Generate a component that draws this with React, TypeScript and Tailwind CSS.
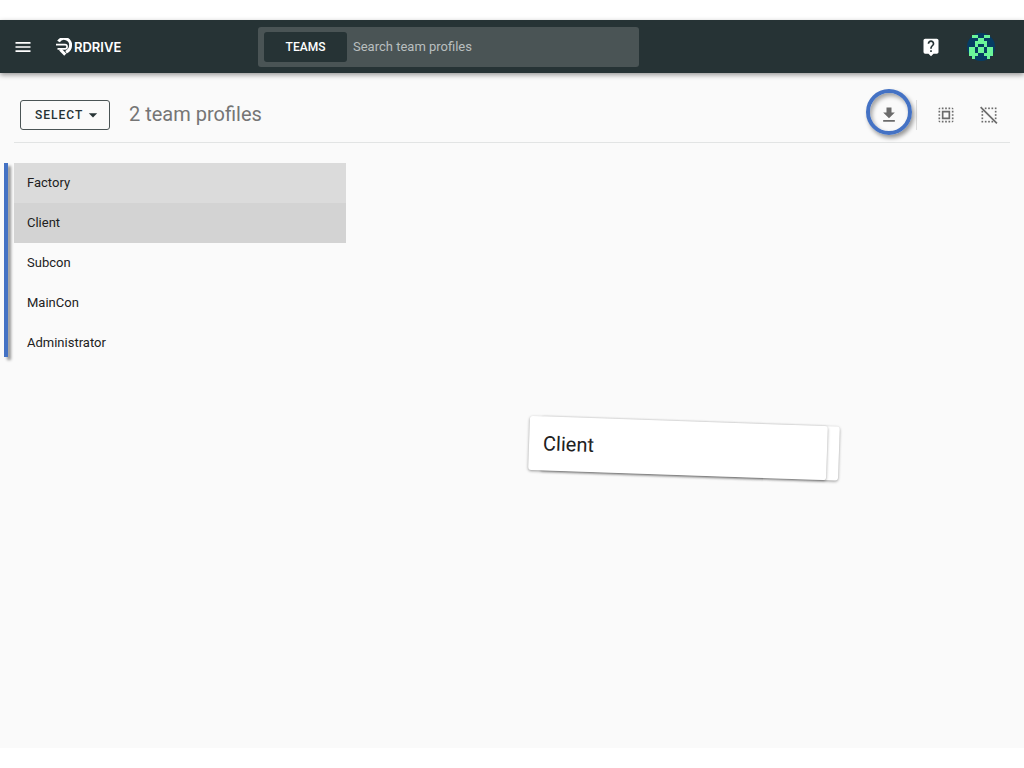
import React, { useState } from 'react';
import { MdArrowDropDown, MdDownload, MdLiveHelp, MdMenu, MdSelectAll } from 'react-icons/md';

const teams = ['Factory', 'Client', 'Subcon', 'MainCon', 'Administrator'];

// filled cells of the identicon, one string per row
const identicon = [
  '.##..##.',
  '...##...',
  '..####..',
  '..#..#..',
  '##.##.##',
  '##.##.##',
  '###..###',
  '.#....#.',
];

// top left corners of the dots in the dotted square
const dots = [
  [7, 3], [11, 3], [15, 3], [19, 3],
  [3, 7], [3, 11], [3, 15], [3, 19],
  [19, 7], [19, 11], [19, 15],
  [7, 19], [11, 19], [15, 19],
];

const Logo: React.FC = () => (
  <a href="#" className="flex items-center gap-0.5 text-white">
    <svg viewBox="0 0 16 18" className="w-4 h-[18px]" fill="none" stroke="currentColor">
      <path d="M2.500 3.600A6.500 6.500 0 0 1 14.500 8C14.500 11 12.500 12.800 10 14.200" strokeWidth="3" />
      <path d="M0 6.700H9A2.100 2.100 0 0 1 9 10.900H1.500" strokeWidth="1.700" />
      <path d="M4.200 11.500L9.300 16.600" strokeWidth="3" />
    </svg>
    <span className="font-['Inter',sans-serif] text-[13px] leading-4 font-semibold">RDRIVE</span>
  </a>
);

const Avatar: React.FC = () => (
  <svg viewBox="0 0 28 28" className="w-7 h-7" shapeRendering="crispEdges">
    <circle cx="14" cy="14" r="14" fill="#063c63" shapeRendering="auto" />
    {identicon.map((row, y) =>
      row.split('').map((cell, x) =>
        cell === '#' ? <rect key={`${x}-${y}`} x={2 + x * 3} y={2 + y * 3} width="3" height="3" fill="#6bf59a" /> : null
      )
    )}
  </svg>
);

const ClearIcon: React.FC = () => (
  <svg viewBox="0 0 24 24" className="w-5 h-5" fill="currentColor">
    {dots.map(([x, y]) => (
      <rect key={`${x}-${y}`} x={x} y={y} width="2" height="2" />
    ))}
    <path d="M2 2.500L21.500 22" stroke="currentColor" strokeWidth="2" />
  </svg>
);

const Header: React.FC = () => {
  const [query, setQuery] = useState('');

  return (
    <header className="relative flex items-center h-[53px] bg-[#263335] shadow-[0_2px_5px_rgba(0,0,0,0.4)]">
      <div className="flex items-center gap-[23px] w-[258px] pl-[13px] shrink-0">
        <button type="button" aria-label="Menu" className="text-white">
          <MdMenu className="w-5 h-5" />
        </button>
        <Logo />
      </div>
      <div className="flex items-center w-[381px] h-10 p-1.5 rounded-[3px] bg-[#4a5455]">
        <button type="button" className="w-[83px] h-[30px] shrink-0 rounded-[3px] bg-[#263335] text-white text-xs font-medium">
          TEAMS
        </button>
        <input
          type="text"
          aria-label="Search team profiles"
          placeholder="Search team profiles"
          value={query}
          onChange={e => setQuery(e.target.value)}
          className="flex-1 min-w-0 px-1.5 bg-transparent text-[13px] leading-5 text-white placeholder:text-[#b9bfbf] focus:outline-none"
        />
      </div>
      <div className="flex items-center gap-[26px] ml-auto pr-[29px]">
        <button type="button" aria-label="Help" className="text-white">
          <MdLiveHelp className="w-5 h-5" />
        </button>
        <button type="button" aria-label="Account">
          <Avatar />
        </button>
      </div>
    </header>
  );
};

const Toolbar: React.FC<{ count: number }> = ({ count }) => (
  <div className="flex items-center h-[70px] mx-3.5 pt-3.5 border-b border-[#e2e4e4]">
    <button
      type="button"
      className="flex items-center w-[90px] h-[30px] pl-3.5 ml-1.5 rounded-[3px] border border-[#4a5455] text-[#263335] text-xs font-medium tracking-[1px]"
    >
      SELECT
      <MdArrowDropDown className="w-5 h-5 shrink-0" />
    </button>
    <h1 className="ml-[19px] pb-0.5 text-xl text-[#757575]">{count} team profiles</h1>
    <div className="flex items-center ml-auto text-[#6b6b6b]">
      <button type="button" aria-label="Download" className="relative">
        <MdDownload className="w-5 h-5" />
        {/* highlight ring */}
        <span className="absolute -left-[13px] -top-4 w-[46px] h-[46px] rounded-full border-4 border-[#4472c4] pointer-events-none shadow-[2px_3px_4px_rgba(0,0,0,0.4),inset_2px_3px_4px_rgba(0,0,0,0.35)]" />
      </button>
      <span className="w-px h-[30px] ml-[17px] bg-[#dcdcdc]" />
      <button type="button" aria-label="Select all" className="ml-[19px]">
        <MdSelectAll className="w-5 h-5" />
      </button>
      <button type="button" aria-label="Clear selection" className="ml-[23px] mr-[11px]">
        <ClearIcon />
      </button>
    </div>
  </div>
);

interface TeamListProps {
  selected: string[];
  active: string;
  onToggle: (name: string) => void;
}

const TeamList: React.FC<TeamListProps> = ({ selected, active, onToggle }) => {
  const rowColor = (name: string) => {
    if (!selected.includes(name)) return '';
    return name === active ? 'bg-[#d3d3d3]' : 'bg-[#dbdbdb]';
  };

  return (
    <div className="flex gap-1.5 pl-1 mt-5">
      <div className="w-1 mb-1.5 bg-[#4472c4] shadow-[3px_3px_3px_rgba(0,0,0,0.4)]" />
      <ul className="w-1/3 max-w-[332px]">
        {teams.map(name => (
          <li key={name}>
            <button
              type="button"
              onClick={() => onToggle(name)}
              className={`block w-full h-10 px-[13px] text-left text-[13px] text-[#212121] ${rowColor(name)}`}
            >
              {name}
            </button>
          </li>
        ))}
      </ul>
    </div>
  );
};

// stack of cards shown for the current selection
const SelectionStack: React.FC<{ name: string }> = ({ name }) => (
  <div className="relative w-[298px] h-[54px] mt-[58px] ml-[529px] rotate-2">
    <div className="absolute inset-0 left-3 -right-3 rounded-[3px] bg-white shadow-[0_1px_3px_rgba(0,0,0,0.4)]" />
    <div className="relative flex items-center h-full px-3.5 rounded-[3px] bg-white text-xl text-[#212121] shadow-[0_1px_3px_rgba(0,0,0,0.4)]">
      {name}
    </div>
  </div>
);

const App: React.FC = () => {
  const [selected, setSelected] = useState<string[]>(['Factory', 'Client']);
  const [active, setActive] = useState('Client');

  const toggle = (name: string) => {
    setActive(name);
    setSelected(prev => (prev.includes(name) ? prev.filter(n => n !== name) : [...prev, name]));
  };

  return (
    <div className="flex flex-col min-h-screen py-5 bg-white font-['Roboto',sans-serif]">
      <Header />
      <main className="flex-1 bg-[#fafafa]">
        <Toolbar count={selected.length} />
        <TeamList selected={selected} active={active} onToggle={toggle} />
        <SelectionStack name={active} />
      </main>
    </div>
  );
};

export default App;
